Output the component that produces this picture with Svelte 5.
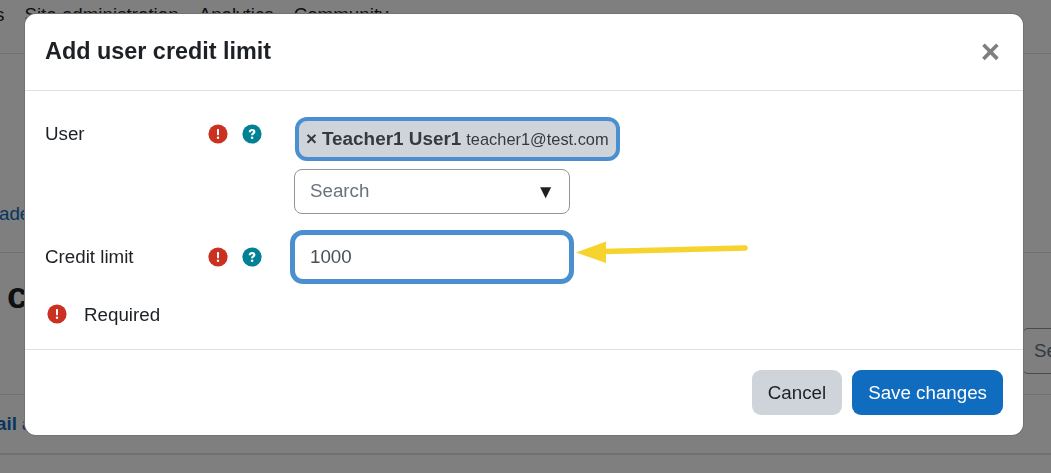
<div class="page">
  <nav class="nav"><span class="s">s</span><span>Site administration</span><span>Analytics</span><span>Community</span></nav>
  <section class="sec-a"><a href="#a">ade</a></section>
  <section class="sec-b">
    <h2>c</h2>
    <div class="page-search">Se</div>
  </section>
  <section class="sec-c"><a href="#a">ail a</a></section>
</div>

<div class="backdrop"></div>

<div class="modal">
  <header class="head">
    <h1>Add user credit limit</h1>
    <span class="close">×</span>
  </header>
  <div class="body">
    <div class="row row-user">
      <label class="lbl" for="s">User</label>
      <div class="icons">
        {@render req()}
        {@render help()}
      </div>
      <div class="field">
        <div class="chip"><span class="x">×</span> <b>Teacher1 User1</b> <small>teacher1@test.com</small></div>
        <div class="select"><span id="s" class="ph">Search</span><span class="caret">▼</span></div>
      </div>
    </div>
    <div class="row row-credit">
      <label class="lbl" for="c">Credit limit</label>
      <div class="icons">
        {@render req()}
        {@render help()}
      </div>
      <div class="field">
        <input id="c" class="num" value="1000" />
      </div>
    </div>
    <div class="required">
      {@render req()}
      <span>Required</span>
    </div>
  </div>
  <footer class="foot">
    <button class="cancel">Cancel</button>
    <button class="save">Save changes</button>
  </footer>
  <svg class="arrow" width="180" height="30" viewBox="0 0 180 30">
    <path d="M28 14.5 L169 11" stroke="#f6d32d" stroke-width="5.5" stroke-linecap="round" fill="none"/>
    <path d="M0 15.5 L30 4.5 L30 26 Z" fill="#f6d32d"/>
  </svg>
</div>

{#snippet req()}
  <svg class="ico" width="20" height="20" viewBox="0 0 20 20"><circle cx="10" cy="10" r="9.6" fill="#ca3120"/><rect x="9" y="5" width="2" height="6.2" rx=".6" fill="#fff"/><circle cx="10" cy="13.8" r="1.2" fill="#fff"/></svg>
{/snippet}
{#snippet help()}
  <svg class="ico" width="20" height="20" viewBox="0 0 20 20"><circle cx="10" cy="10" r="9.6" fill="#008196"/><path d="M7.8 8.3 C7.8 6.7 8.8 6 10 6 C11.3 6 12.3 6.7 12.3 7.9 C12.3 9.5 10.1 9.5 10.1 11.2" fill="none" stroke="#fff" stroke-width="2.2"/><circle cx="10.1" cy="13.8" r="1.3" fill="#fff"/></svg>
{/snippet}

<style>
  :global(body) { margin: 0; font-family: "Liberation Sans", Arial, sans-serif; overflow: hidden; background: #fff; }
  .page { width: 1051px; height: 473px; overflow: hidden; font-size: 18.75px; color: #1d2125; }
  .nav { height: 53px; border-bottom: 1px solid #dee2e6; display: flex; gap: 20px; line-height: 30px; }
  .s { margin-left: -5px; }
  .sec-a { height: 198px; border-bottom: 1px solid #dee2e6; display: flex; align-items: flex-end; }
  .sec-a a { color: #0f6cbf; text-decoration: none; margin-left: -1px; margin-bottom: 27px; }
  .sec-b { height: 141px; border-bottom: 1px solid #dee2e6; display: flex; justify-content: space-between; align-items: flex-start; }
  h2 { margin: 20px 0 0 7px; font-size: 37px; line-height: 46px; }
  .page-search { flex: none; margin-top: 75px; margin-right: -60px; box-sizing: border-box; width: 89px; height: 46px; border: 1px solid #8f959e; border-radius: 6px; line-height: 44px; padding-left: 11px; color: #6a737b; }
  .sec-c { height: 58px; border-bottom: 2px solid #dee2e6; }
  .sec-c a { color: #0f6cbf; font-weight: 700; text-decoration: none; line-height: 58px; margin-left: -4px; display: inline-block; }
  .backdrop { position: fixed; inset: 0; background: rgba(0,0,0,.5); }
  .modal { position: fixed; left: 24px; top: 13px; width: 998px; height: 421px; background: #fff; border: 1px solid rgba(0,0,0,.55); border-radius: 12px; font-size: 18.75px; color: #1d2125; display: flex; flex-direction: column; }
  .head { height: 76px; border-bottom: 1px solid #dee2e6; display: flex; justify-content: space-between; align-items: center; padding: 0 20px; flex: none; }
  h1 { margin: -2px 0 0; font-size: 23.4px; font-weight: 700; line-height: 74px; }
  .close { font-size: 33px; font-weight: 700; color: #7f7f7f; line-height: 1; margin-right: 3px; margin-top: -1px; }
  .body { flex: 1; padding: 25px 20px 0; position: relative; }
  .row { display: flex; align-items: flex-start; }
  .lbl { width: 163px; flex: none; line-height: 36px; }
  .icons { width: 86px; flex: none; display: flex; gap: 15px; align-items: center; height: 36px; }
  .icons .ico:last-child { margin-left: -1px; }
  .ico { display: block; flex: none; }
  .field { display: flex; flex-direction: column; align-items: flex-start; }
  .chip { margin-left: 1px; margin-top: 1px; box-sizing: border-box; height: 44px; width: 325px; border: 4px solid #4a90d0; border-radius: 12px; background: #ced4da; color: #343a40; display: flex; align-items: center; padding-left: 7px; gap: 5px; white-space: nowrap; }
  .chip b { font-size: 18.9px; }
  .x { font-weight: 700; }
  .chip small { font-size: 16.4px; }
  .select { margin-top: 8px; box-sizing: border-box; width: 276px; height: 45px; border: 1px solid #8f959e; border-radius: 8px; display: flex; align-items: center; justify-content: space-between; padding: 0 14px 0 15px; color: #6a737b; }
  .ph { margin-bottom: 2px; }
  .caret { color: #1d2125; font-size: 19px; }
  .row-credit { margin-top: 25px; }
  .num { box-sizing: border-box; width: 284px; height: 54px; border: 5px solid #4a90d0; border-radius: 13px; font: inherit; color: #495057; padding: 0 15px; margin: -9px 0 -1px -4px; outline: none; background: #fff; }
  .required { display: flex; align-items: center; margin-top: 14px; gap: 17px; line-height: 36px; padding-left: 2px; }
  .required .ico { margin-top: -2px; }
  .foot { height: 86px; flex: none; border-top: 1px solid #dee2e6; display: flex; justify-content: flex-end; align-items: flex-start; gap: 10px; padding: 20px 20px 0; box-sizing: border-box; }
  button { font: inherit; height: 45px; border: 0; border-radius: 9px; padding: 0 16px; }
  .cancel { background: #ced4da; color: #1d2125; }
  .save { background: #0f6cbf; color: #fff; }
  .arrow { position: absolute; left: 551px; top: 223px; }
</style>
